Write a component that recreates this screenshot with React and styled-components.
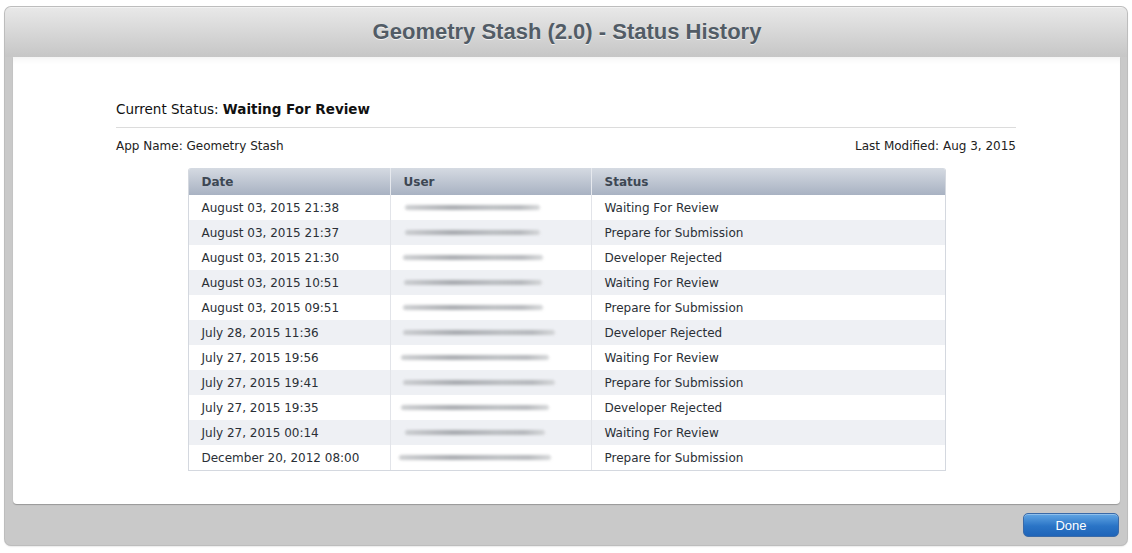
import React from "react";
import styled, { createGlobalStyle } from "styled-components";

const Global = createGlobalStyle`
  html, body { margin: 0; padding: 0; background: #ffffff; }
  body { font-family: "DejaVu Sans", "Liberation Sans", sans-serif; }
`;

const Page = styled.div`
  padding: 7px 5px 8px 5px;
  width: 1132px;
  height: 553px;
  box-sizing: border-box;
`;

const Dialog = styled.div`
  width: 1122px;
  height: 538px;
  border-radius: 6px;
  background: #c9c9c9;
  box-shadow: 0 0 0 1px #bdbdbd, 0 1px 2px rgba(0,0,0,0.25);
  display: flex;
  flex-direction: column;
  overflow: hidden;
`;

const Header = styled.div`
  height: 50px;
  flex: none;
  background: linear-gradient(#e8e8e8, #c6c6c6);
  display: flex;
  align-items: center;
  justify-content: center;
  border-top: 1px solid #f2f2f2;
  box-sizing: border-box;
  padding-bottom: 2px;
`;

const Title = styled.h1`
  margin: 0 0 0 2px;
  font-family: "Liberation Sans", Arial, sans-serif;
  font-weight: bold;
  font-size: 22px;
  color: #525c66;
  text-shadow: 0 1px 0 rgba(255,255,255,0.7);
`;

const Panel = styled.div`
  margin: 0 7px 0 8px;
  height: 447px;
  flex: none;
  background: #fff;
  border-radius: 0 0 4px 4px;
  box-shadow: 0 1px 1px rgba(0,0,0,0.25), inset 0 6px 6px -4px rgba(0,0,0,0.06);
  padding: 44px 104px 0 103px;
  box-sizing: border-box;
`;

const StatusLine = styled.div`
  font-size: 13.5px;
  color: #111;
  padding-bottom: 10px;
  border-bottom: 1px solid #dcdcdc;
`;

const Strong = styled.span`
  font-weight: bold;
`;

const MetaRow = styled.div`
  display: flex;
  justify-content: space-between;
  font-size: 12px;
  color: #222;
  margin-top: 11px;
`;

const TableWrap = styled.div`
  display: flex;
  justify-content: center;
  margin-top: 15px;
  padding-left: 1px;
`;

const Table = styled.div`
  width: 756px;
  border: 1px solid #d4d8df;
  border-top: none;
  border-radius: 3px 3px 0 0;
  overflow: hidden;
`;

const Row = styled.div`
  display: grid;
  grid-template-columns: 201px 201px 1fr;
  height: ${(p) => (p.$head ? "27px" : "25px")};
  background: ${(p) =>
    p.$head
      ? "linear-gradient(#d5dae2, #a8b2c2)"
      : p.$alt
      ? "#eef0f4"
      : "#ffffff"};
`;

const Cell = styled.div`
  display: flex;
  align-items: center;
  padding-left: 13px;
  font-size: 12px;
  color: ${(p) => (p.$head ? "#3d4753" : "#2a2f36")};
  font-weight: ${(p) => (p.$head ? "bold" : "normal")};
  border-left: ${(p) =>
    p.$first ? "none" : p.$head ? "1px solid #e6e9ee" : "1px solid #e2e4e9"};
  white-space: nowrap;
  overflow: hidden;
`;

const Smudge = styled.div`
  width: ${(p) => p.$w}px;
  margin-left: ${(p) => p.$x}px;
  height: 5px;
  border-radius: 3px;
  background: linear-gradient(90deg, #c4c6c9, #9a9da2 35%, #b0b3b7 65%, #a9acb0 85%, #cfd1d3);
  filter: blur(1.5px);
  opacity: 0.85;
`;

const Footer = styled.div`
  flex: 1;
  display: flex;
  align-items: center;
  justify-content: flex-end;
  padding-right: 8px;
`;

const DoneButton = styled.button`
  width: 96px;
  height: 24px;
  border-radius: 5px;
  border: 1px solid #3a6aa8;
  background: linear-gradient(#62a6e4, #2a74c6 55%, #1f64b8);
  color: #fff;
  font-family: "Liberation Sans", Arial, sans-serif;
  font-size: 13px;
  padding: 0;
  box-shadow: inset 0 1px 0 rgba(255,255,255,0.3);
  margin-top: 1px;
`;

const rows = [
  ["August 03, 2015 21:38", "Waiting For Review", 14, 135],
  ["August 03, 2015 21:37", "Prepare for Submission", 14, 135],
  ["August 03, 2015 21:30", "Developer Rejected", 12, 140],
  ["August 03, 2015 10:51", "Waiting For Review", 13, 138],
  ["August 03, 2015 09:51", "Prepare for Submission", 12, 140],
  ["July 28, 2015 11:36", "Developer Rejected", 12, 152],
  ["July 27, 2015 19:56", "Waiting For Review", 10, 148],
  ["July 27, 2015 19:41", "Prepare for Submission", 12, 152],
  ["July 27, 2015 19:35", "Developer Rejected", 10, 148],
  ["July 27, 2015 00:14", "Waiting For Review", 14, 140],
  ["December 20, 2012 08:00", "Prepare for Submission", 8, 152],
];

export default function App() {
  return (
    <>
      <Global />
      <Page>
        <Dialog>
          <Header>
            <Title>Geometry Stash (2.0) - Status History</Title>
          </Header>
          <Panel>
            <StatusLine>
              Current Status: <Strong>Waiting For Review</Strong>
            </StatusLine>
            <MetaRow>
              <span>App Name: Geometry Stash</span>
              <span>Last Modified: Aug 3, 2015</span>
            </MetaRow>
            <TableWrap>
              <Table>
                <Row $head>
                  <Cell $head $first>Date</Cell>
                  <Cell $head>User</Cell>
                  <Cell $head>Status</Cell>
                </Row>
                {rows.map(([d, s, x, w], i) => (
                  <Row key={i} $alt={i % 2 === 1}>
                    <Cell $first>{d}</Cell>
                    <Cell>
                      <Smudge $x={x - 13} $w={w} />
                    </Cell>
                    <Cell>{s}</Cell>
                  </Row>
                ))}
              </Table>
            </TableWrap>
          </Panel>
          <Footer>
            <DoneButton>Done</DoneButton>
          </Footer>
        </Dialog>
      </Page>
    </>
  );
}
